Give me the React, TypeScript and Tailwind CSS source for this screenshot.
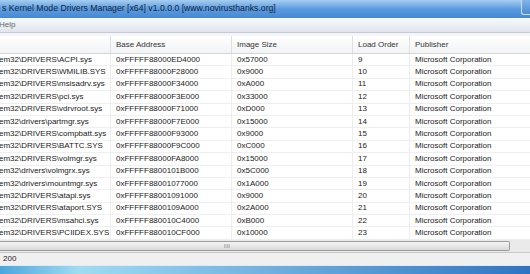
import React from "react";

type Drv = { path: string; base: string; size: string; order: number };

const rows: Drv[] = [
  { path: "em32\\DRIVERS\\ACPI.sys", base: "0xFFFFF88000ED4000", size: "0x57000", order: 9 },
  { path: "em32\\DRIVERS\\WMILIB.SYS", base: "0xFFFFF88000F28000", size: "0x9000", order: 10 },
  { path: "em32\\DRIVERS\\msisadrv.sys", base: "0xFFFFF88000F34000", size: "0xA000", order: 11 },
  { path: "em32\\DRIVERS\\pci.sys", base: "0xFFFFF88000F3E000", size: "0x33000", order: 12 },
  { path: "em32\\DRIVERS\\vdrvroot.sys", base: "0xFFFFF88000F71000", size: "0xD000", order: 13 },
  { path: "em32\\drivers\\partmgr.sys", base: "0xFFFFF88000F7E000", size: "0x15000", order: 14 },
  { path: "em32\\DRIVERS\\compbatt.sys", base: "0xFFFFF88000F93000", size: "0x9000", order: 15 },
  { path: "em32\\DRIVERS\\BATTC.SYS", base: "0xFFFFF88000F9C000", size: "0xC000", order: 16 },
  { path: "em32\\DRIVERS\\volmgr.sys", base: "0xFFFFF88000FA8000", size: "0x15000", order: 17 },
  { path: "em32\\drivers\\volmgrx.sys", base: "0xFFFFF8800101B000", size: "0x5C000", order: 18 },
  { path: "em32\\drivers\\mountmgr.sys", base: "0xFFFFF88001077000", size: "0x1A000", order: 19 },
  { path: "em32\\DRIVERS\\atapi.sys", base: "0xFFFFF88001091000", size: "0x9000", order: 20 },
  { path: "em32\\DRIVERS\\ataport.SYS", base: "0xFFFFF8800109A000", size: "0x2A000", order: 21 },
  { path: "em32\\DRIVERS\\msahci.sys", base: "0xFFFFF880010C4000", size: "0xB000", order: 22 },
  { path: "em32\\DRIVERS\\PCIIDEX.SYS", base: "0xFFFFF880010CF000", size: "0x10000", order: 23 },
];

// column widths of the (horizontally scrolled) list view
const cell = "shrink-0 overflow-hidden whitespace-nowrap border-r border-[#ededed] pl-[5px]";

export default function App() {
  return (
    <div className="flex h-[274px] w-[530px] flex-col overflow-hidden bg-white font-['Liberation_Sans',Arial,sans-serif] text-[8px] text-[#222]">
      {/* title bar */}
      <div className="flex h-[18px] shrink-0 items-start justify-between bg-gradient-to-b from-[#a7cdf0] via-[#5a9be0] to-[#4688d2]">
        <span className="pt-[3px] pl-[2px] text-[8.7px] leading-[11px] text-[#102440]">
          s Kernel Mode Drivers Manager [x64] v1.0.0.0 [www.novirusthanks.org]
        </span>
        <div className="h-[15px] w-[9px] rounded-bl-[3px] border-b border-l border-[#c9def3] bg-gradient-to-b from-[#7fb4e8] to-[#4a8cd4]" />
      </div>

      {/* menu bar */}
      <div className="flex h-[15px] shrink-0 items-center border-b border-[#c5cbd6] bg-gradient-to-b from-[#f7f9fc] to-[#dfe5ef] text-[8px] text-[#666]">
        <span className="-ml-[1px]">Help</span>
      </div>
      <div className="h-[3px] shrink-0 bg-[#f4f5f7]" />

      {/* list view */}
      <div className="flex min-h-0 flex-1 flex-col overflow-hidden">
        <div className="-ml-[2px] flex h-[18px] shrink-0 items-center border-b border-[#d5d5d5] bg-gradient-to-b from-white to-[#f2f3f5] text-[#333]">
          <div className="w-[113px] shrink-0 self-stretch border-r border-[#dde0e4]" />
          <div className="w-[121px] shrink-0 self-stretch border-r border-[#dde0e4] pl-[5px] leading-[18px]">Base Address</div>
          <div className="w-[121px] shrink-0 self-stretch border-r border-[#dde0e4] pl-[5px] leading-[18px]">Image Size</div>
          <div className="w-[57px] shrink-0 self-stretch border-r border-[#dde0e4] pl-[5px] leading-[18px]">Load Order</div>
          <div className="w-[118px] shrink-0 self-stretch pl-[5px] leading-[18px]">Publisher</div>
        </div>

        {rows.map((r) => (
          <div key={r.order} className="-ml-[2px] flex h-[12.4px] shrink-0 items-center border-b border-[#efefef] leading-[12px]">
            <div className="w-[113px] shrink-0 overflow-hidden whitespace-nowrap border-r border-[#ededed] pl-[1px]">{r.path}</div>
            <div className={`w-[121px] ${cell}`}>{r.base}</div>
            <div className={`w-[121px] ${cell}`}>{r.size}</div>
            <div className={`w-[57px] ${cell}`}>{r.order}</div>
            <div className="w-[118px] shrink-0 whitespace-nowrap pl-[5px]">Microsoft Corporation</div>
          </div>
        ))}
      </div>

      {/* horizontal scrollbar */}
      <div className="flex h-[12px] shrink-0 items-stretch bg-[#eaeaea] py-[1px]">
        <div className="flex w-[510px] items-center rounded-r-[2px] border border-l-0 border-[#9c9c9c] bg-gradient-to-b from-[#f5f5f5] to-[#d9d9d9] pl-[224px]">
          <span className="text-[6px] leading-[6px] tracking-[0.5px] text-[#777]">III</span>
        </div>
      </div>

      {/* status bar */}
      <div className="flex h-[13px] shrink-0 items-center border-t border-[#c8c8c8] bg-[#f0f0f0] pl-[3px] text-[8px]">
        200
      </div>

      {/* window frame bottom */}
      <div className="h-[9px] shrink-0 border-t border-[#dfeaf5] bg-gradient-to-r from-[#4aa6dc] via-[#9fdcf2] via-15% to-[#2f74c2]" />
    </div>
  );
}
